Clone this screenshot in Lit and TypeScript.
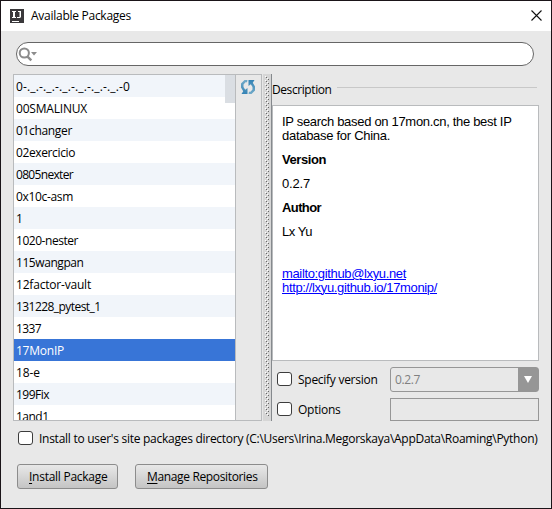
import { LitElement, html, css, svg } from "lit";
import { customElement, property } from "lit/decorators.js";

/** A label whose letter spacing is computed so that it takes a given width. */
@customElement("fit-text")
class FitText extends LitElement {
  @property({ type: Number }) width = 0;

  static styles = css`
    :host { display: inline-block; white-space: pre; flex: none; }
  `;

  render() {
    return html`<slot></slot>`;
  }

  firstUpdated() {
    const count = (this.textContent ?? "").length;
    const natural = this.getBoundingClientRect().width;
    if (this.width && count) {
      this.style.letterSpacing = `${(this.width - natural) / count}px`;
    }
  }
}

const packages: [string, number][] = [
  ["0-._.-._.-._.-._.-._.-._.-0", 114],
  ["00SMALINUX", 71],
  ["01changer", 56],
  ["02exercicio", 59],
  ["0805nexter", 57],
  ["0x10c-asm", 57],
  ["1", 6],
  ["1020-nester", 62],
  ["115wangpan", 67.5],
  ["12factor-vault", 75],
  ["131228_pytest_1", 84.5],
  ["1337", 25],
  ["17MonIP", 48],
  ["18-e", 24],
  ["199Fix", 33],
  ["1and1", 32.5],
];

@customElement("app-root")
class AppRoot extends LitElement {
  static styles = css`
    :host { display: block; background: #fff; }
    * { box-sizing: border-box; }
    .window {
      width: 552px; height: 509px; overflow: hidden; position: relative;
      border: 1px solid #1a1418; background: #e8e8e8;
      font: 12px/16px "Open Sans", "Noto Sans", sans-serif; color: #000;
      display: flex; flex-direction: column;
    }
    .corners { position: absolute; left: -1px; top: -1px; }
    .title {
      height: 30px; flex: none; background: #fff;
      display: flex; align-items: center; padding: 0 9px 0 9px;
    }
    .title fit-text { margin-left: 7px; }
    .title svg { display: block; flex: none; }
    .title .close { margin: -2px 0 0 auto; }
    .search {
      margin: 11px 17px 0 15px; height: 24px; flex: none;
      border: 1px solid #666; border-radius: 12px; background: #fff;
      padding: 4px 0 0 1px;
    }
    .search svg { display: block; }
    .body { margin: 8px 12px 0; height: 347px; flex: none; display: flex; }
    .left {
      width: 249px; border: 1px solid #b9bbbd; display: flex; flex: none;
    }
    .list {
      width: 221px; position: relative; overflow: hidden; background: #fff;
    }
    .row { height: 22px; padding: 4px 0 0 2px; }
    .row:nth-child(odd) { background: #f1f5fa; }
    .row.selected { background: #3875d7; color: #fff; }
    .thumb {
      position: absolute; right: 0; top: 0; width: 10px; height: 28px;
      background: #dadee3;
    }
    .tools { width: 26px; border-left: 1px solid #b9bbbd; padding: 4px 0 0 4px; }
    .tools svg { display: block; }
    .splitter {
      width: 9px; margin-left: 1px; flex: none; display: block;
      background: #d6d6d6; border-right: 1px solid #85898d;
    }
    .right { width: 267px; flex: none; display: flex; flex-direction: column; }
    .legend { display: flex; height: 31px; padding-top: 8px; }
    .legend i { flex: 1; height: 1px; background: #c8c8c8; margin: 5px 2px 0 5px; }
    .details {
      height: 256px; border: 1px solid #b9bbbd; background: #fff;
      padding: 9px; font: 13px/14px "Liberation Sans", Arial, sans-serif;
    }
    .details p { margin: 0 0 10px; }
    .details p.links { margin-top: 28px; }
    .link { color: #0000ff; text-decoration: underline; text-underline-offset: 1px; text-decoration-thickness: 1px; }
    .options { display: grid; grid-template-columns: 118px 149px; padding-top: 6px; row-gap: 6px; }
    .check { display: flex; align-items: center; gap: 6px; padding-left: 5px; }
    .box {
      width: 15px; height: 14px; border: 1px solid #3c3c3c; border-radius: 3px;
      background: #fff; flex: none;
    }
    .options .check { margin-top: -1px; }
    .options fit-text { margin-top: 2px; }
    .combo {
      height: 25px; border: 1px solid #969696; border-radius: 3px;
      color: #808080; display: flex; justify-content: space-between;
      align-items: center; padding-left: 4px;
    }
    .options .combo fit-text { margin-top: 0; }
    .arrow {
      width: 20px; height: 23px; background: #969696;
      display: flex; align-items: center; justify-content: center;
    }
    .field { height: 23px; border: 1px solid #969696; }
    .site { margin: 9px 0 0 12px; height: 16px; flex: none; padding-left: 5px; }
    .site fit-text { margin-top: 2px; }
    .buttons { display: flex; gap: 17px; margin: 18px 0 0 16px; }
    .button {
      height: 25px; border: 1px solid #8c8c8c; border-radius: 3px;
      background: linear-gradient(#e8e8e8, #c4c4c4); padding: 4px 0 0 11px;
    }
    .install { width: 101px; }
    .manage { width: 133px; }
    u { text-underline-offset: 2px; text-decoration-thickness: 1px; }
  `;

  private dots() {
    const ys = Array.from({ length: 85 }, (_, i) => 3 + i * 4);
    return svg`${ys.map(
      (y) => svg`<path fill="#666" d="M3 ${y}h1v1h-1z M5 ${y + 2}h1v1h-1z"/>
        <path fill="#fff" d="M2 ${y - 1}h1v1h-1z M4 ${y + 1}h1v1h-1z"/>`
    )}`;
  }

  render() {
    return html`
      <div class="window">
        <div class="title">
          <svg width="14" height="14" viewBox="0 0 14 14">
            <path fill="#3a383b" d="M0 0h14v14H0z" />
            <path fill="#fff" d="M2 2h4v1H2zM3 3h2v5H3zM2 8h4v1H2zM8 2h3v1H8zM9.500 3H11v5H9.500zM7 8h3.500v1H7zM2 12h7v1H2z" />
          </svg>
          <fit-text width="100">Available Packages</fit-text>
          <svg class="close" width="11" height="11" viewBox="0 0 11 11">
            <path stroke="#111" stroke-width="1.1" d="M.5.5l10 10M10.5.5l-10 10" />
          </svg>
        </div>
        <div class="search">
          <svg width="22" height="15" viewBox="0 0 22 15">
            <circle cx="6.3" cy="6" r="4.6" fill="none" stroke="#8c8c8c" stroke-width="2" />
            <path stroke="#8c8c8c" stroke-width="2.4" d="M9.3 9.3l4 4" />
            <path fill="#8c8c8c" d="M13 5h6l-3 3.6z" />
          </svg>
        </div>
        <div class="body">
          <div class="left">
            <div class="list">
              ${packages.map(
                ([name, width]) => html`<div class="row ${name === "17MonIP" ? "selected" : ""}"><fit-text .width=${width}>${name}</fit-text></div>`
              )}
              <div class="thumb"></div>
            </div>
            <div class="tools">
              <svg width="16" height="16" viewBox="0 0 16 16">
                <defs>
                  <linearGradient id="blue" x1="0" y1="0" x2="0" y2="1">
                    <stop offset="0" stop-color="#72abc9" />
                    <stop offset="1" stop-color="#3483b5" />
                  </linearGradient>
                  <linearGradient id="blue2" x1="0" y1="0" x2="0" y2="1">
                    <stop offset="0" stop-color="#3483b5" />
                    <stop offset="1" stop-color="#72abc9" />
                  </linearGradient>
                </defs>
                <path fill="url(#blue)" d="M7.500 1H4.500L1 4.500V8.500L3.200 12.200L1.500 15H7.500V9L5.200 10.800L3.500 8V5.500L5.500 3.300H7z" />
                <path fill="url(#blue2)" d="M8.500 15H11.500L15 11.500V7.500L12.800 3.800L14.500 1H8.500V7L10.800 5.200L12.500 8V10.500L10.500 12.700H9z" />
              </svg>
            </div>
          </div>
          <svg class="splitter" width="9" height="347">${this.dots()}</svg>
          <div class="right">
            <div class="legend"><fit-text width="59.5">Description</fit-text><i></i></div>
            <div class="details">
              <p><fit-text width="229.5">IP search based on 17mon.cn, the best IP</fit-text><br /><fit-text width="108">database for China.</fit-text></p>
              <p><b><fit-text width="44">Version</fit-text></b></p>
              <p><fit-text width="28">0.2.7</fit-text></p>
              <p><b><fit-text width="39">Author</fit-text></b></p>
              <p><fit-text width="30">Lx Yu</fit-text></p>
              <p class="links"><fit-text class="link" width="124">mailto:github@lxyu.net</fit-text><br /><fit-text class="link" width="155">http://lxyu.github.io/17monip/</fit-text></p>
            </div>
            <div class="options">
              <div class="check"><span class="box"></span><fit-text width="79.5">Specify version</fit-text></div>
              <div class="combo">
                <fit-text width="25">0.2.7</fit-text>
                <span class="arrow"><svg width="8" height="7" viewBox="0 0 8 7"><path fill="#fff" d="M0 0h8L4 7z" /></svg></span>
              </div>
              <div class="check"><span class="box"></span><fit-text width="42.5">Options</fit-text></div>
              <div class="field"></div>
            </div>
          </div>
        </div>
        <div class="check site">
          <span class="box"></span>
          <fit-text width="498.5">Install to user's site packages directory (C:\\Users\\Irina.Megorskaya\\AppData\\Roaming\\Python)</fit-text>
        </div>
        <div class="buttons">
          <div class="button install"><fit-text width="78.5"><u>I</u>nstall Package</fit-text></div>
          <div class="button manage"><fit-text width="110.5"><u>M</u>anage Repositories</fit-text></div>
        </div>
        <svg class="corners" width="552" height="509">
          <path fill="#fff" d="M0 0h4v1H1v3H0zM548 0h4v4h-1V1h-3zM0 505h1v2l1 1h2v1H0zM552 505v4h-4v-1h2l1-1v-2z" />
        </svg>
      </div>
    `;
  }
}
